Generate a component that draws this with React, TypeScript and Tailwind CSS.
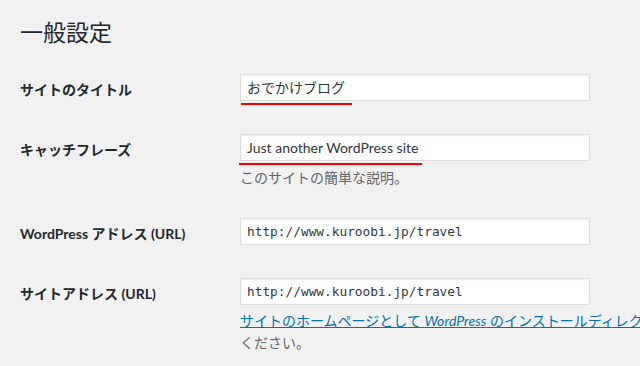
import React from "react";

const jp = { fontFamily: 'Lato, "Noto Sans CJK JP", sans-serif' };

function Field({
    value,
    mono,
    mark,
}: {
    value: string;
    mono?: boolean;
    mark?: { left: number; width: number };
}) {
    return (
        <div className="relative w-[350px] h-[27px]">
            <div
                className={
                    "w-full h-full bg-white border border-[#dddddd] shadow-[inset_0_1px_2px_rgba(0,0,0,0.07)] flex items-center px-[6px] text-[#32373c] " +
                    (mono ? "text-[12.8px]" : "text-[14px]")
                }
                style={mono ? { fontFamily: '"DejaVu Sans Mono", "Liberation Mono", monospace' } : jp}
            >
                {value}
            </div>
            {mark && (
                <div
                    className="absolute top-[29px] h-[2px] bg-[#ff0000]"
                    style={{ left: mark.left, width: mark.width }}
                />
            )}
        </div>
    );
}

function Row({ label, children, className }: { label: string; children: React.ReactNode; className?: string }) {
    return (
        <div className={"flex " + (className ?? "")}>
            <div className="w-[220px] shrink-0 h-[27px] pt-[3px] flex items-center text-[14px] font-bold text-[#23282d]">
                {label}
            </div>
            <div className="flex flex-col">{children}</div>
        </div>
    );
}

export default function App() {
    return (
        <div className="w-[640px] h-[366px] bg-[#f1f1f1] overflow-hidden pl-[20px]" style={jp}>
            <h1 className="pt-[18px] h-[49px] text-[23px] leading-[29px] font-normal text-[#23282d]">一般設定</h1>

            <Row label="サイトのタイトル" className="mt-[25px]">
                <Field value="おでかけブログ" mark={{ left: 1, width: 111 }} />
            </Row>

            <Row label="キャッチフレーズ" className="mt-[33px]">
                <Field value="Just another WordPress site" mark={{ left: -1, width: 183 }} />
                <p className="mt-[6px] text-[14px] leading-[22px] text-[#666666]">このサイトの簡単な説明。</p>
            </Row>

            <Row label="WordPress アドレス (URL)" className="mt-[29px]">
                <Field value="http://www.kuroobi.jp/travel" mono />
            </Row>

            <Row label="サイトアドレス (URL)" className="mt-[33px]">
                <Field value="http://www.kuroobi.jp/travel" mono />
                <div className="mt-[5px] w-[380px] text-[14px] leading-[22px] text-[#666666]">
                    <a href="#" className="block w-[400px] overflow-hidden whitespace-nowrap text-[#0073aa] underline">
                        サイトのホームページとして <i>WordPress</i> のインストールディレクトリとは異なる場所を設定する場合はここにアドレスを入力して
                    </a>
                    <span>ください。</span>
                </div>
            </Row>
        </div>
    );
}
